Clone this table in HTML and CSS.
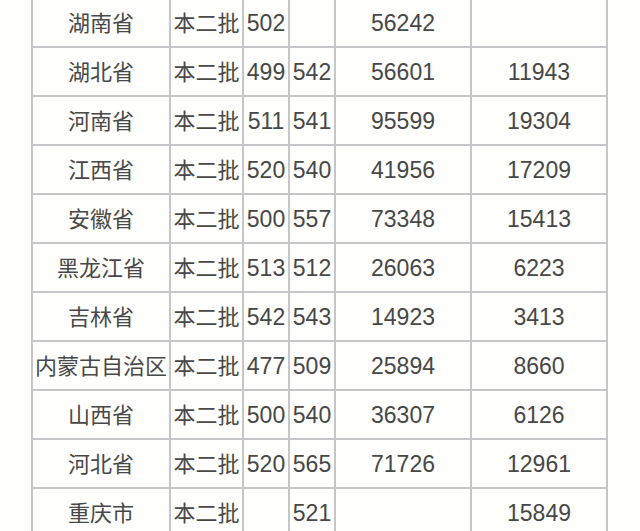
FILE: index.html
```html
<!DOCTYPE html>
<html lang="zh-CN">
<head>
<meta charset="utf-8">
<title>本二批分数线</title>
<link rel="stylesheet" href="styles.css">
</head>
<body>
<div class="sheet">
  <div class="grid">
    <div class="c name">湖南省</div><div class="c batch">本二批</div><div class="c num">502</div><div class="c num"></div><div class="c num">56242</div><div class="c num"></div>
    <div class="c name">湖北省</div><div class="c batch">本二批</div><div class="c num">499</div><div class="c num">542</div><div class="c num">56601</div><div class="c num">11943</div>
    <div class="c name">河南省</div><div class="c batch">本二批</div><div class="c num">511</div><div class="c num">541</div><div class="c num">95599</div><div class="c num">19304</div>
    <div class="c name">江西省</div><div class="c batch">本二批</div><div class="c num">520</div><div class="c num">540</div><div class="c num">41956</div><div class="c num">17209</div>
    <div class="c name">安徽省</div><div class="c batch">本二批</div><div class="c num">500</div><div class="c num">557</div><div class="c num">73348</div><div class="c num">15413</div>
    <div class="c name">黑龙江省</div><div class="c batch">本二批</div><div class="c num">513</div><div class="c num">512</div><div class="c num">26063</div><div class="c num">6223</div>
    <div class="c name">吉林省</div><div class="c batch">本二批</div><div class="c num">542</div><div class="c num">543</div><div class="c num">14923</div><div class="c num">3413</div>
    <div class="c name">内蒙古自治区</div><div class="c batch">本二批</div><div class="c num">477</div><div class="c num">509</div><div class="c num">25894</div><div class="c num">8660</div>
    <div class="c name">山西省</div><div class="c batch">本二批</div><div class="c num">500</div><div class="c num">540</div><div class="c num">36307</div><div class="c num">6126</div>
    <div class="c name">河北省</div><div class="c batch">本二批</div><div class="c num">520</div><div class="c num">565</div><div class="c num">71726</div><div class="c num">12961</div>
    <div class="c name">重庆市</div><div class="c batch">本二批</div><div class="c num"></div><div class="c num">521</div><div class="c num"></div><div class="c num">15849</div>
  </div>
</div>
</body>
</html>
```
FILE: styles.css
```css
html, body {
  margin: 0;
  padding: 0;
  background: #fefefd;
  overflow: hidden;
}
.sheet {
  width: 640px;
  height: 531px;
  overflow: hidden;
  padding-left: 31px;
  box-sizing: border-box;
}
.grid {
  display: grid;
  grid-template-columns: 138px 73px 46px 46px 136px 136px;
  grid-auto-rows: 49px;
  width: max-content;
  margin-top: -3px;
  border-left: 2px solid #c6c6c9;
  border-top: 2px solid #c6c6c9;
  font-family: "Liberation Sans", "Noto Sans CJK SC", sans-serif;
  font-size: 23px;
  color: #474747;
}
.c {
  box-sizing: border-box;
  border-right: 2px solid #c6c6c9;
  border-bottom: 2px solid #c6c6c9;
  display: flex;
  align-items: center;
  justify-content: center;
  white-space: nowrap;
  overflow: visible;
}
.name, .batch {
  font-family: "Noto Sans CJK SC", sans-serif;
  font-size: 22px;
  color: #484848;
  padding-bottom: 3px;
}
.num {
  padding-top: 1px;
}
```
